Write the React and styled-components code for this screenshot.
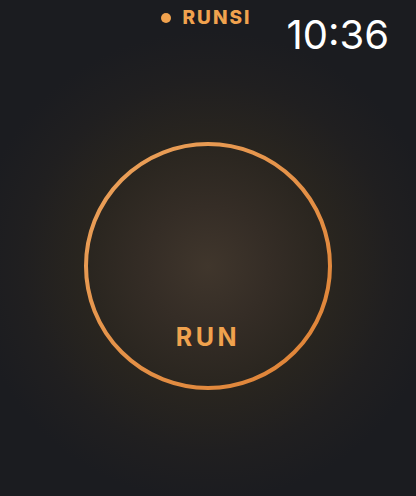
import styled, { createGlobalStyle } from "styled-components";

const GlobalStyle = createGlobalStyle`
  html, body {
    margin: 0;
    padding: 0;
    background: #1b1c20;
  }
  #root {
    height: 100vh;
  }
`;

function App() {
  return (
    <>
      <GlobalStyle />
      <StScreen>
        <StHeader>
          <StBrand>
            <StDot />
            <StBrandName>RUNSI</StBrandName>
          </StBrand>
          <StTime>10:36</StTime>
        </StHeader>
        <StMain>
          <StRing>
            <svg width="248" height="248" viewBox="0 0 248 248">
              <defs>
                <linearGradient id="ringGrad" x1="0" y1="0" x2="1" y2="1">
                  <stop offset="0" stopColor="#eba25c" />
                  <stop offset="1" stopColor="#de8134" />
                </linearGradient>
              </defs>
              <circle
                cx="124"
                cy="124"
                r="122"
                fill="none"
                stroke="url(#ringGrad)"
                strokeWidth="4"
              />
            </svg>
            <StRunLabel>RUN</StRunLabel>
          </StRing>
        </StMain>
      </StScreen>
    </>
  );
}

export default App;

const StScreen = styled.div`
  width: 416px;
  height: 496px;
  overflow: hidden;
  display: flex;
  flex-direction: column;
  font-family: Inter, "Liberation Sans", sans-serif;
  background: radial-gradient(
    circle at 208px 266px,
    #40362c 0px,
    #352d26 60px,
    #29251f 125px,
    #201f20 185px,
    #1b1c20 235px
  );
`;

const StHeader = styled.header`
  display: flex;
  align-items: flex-start;
  justify-content: flex-end;
  padding: 8px 27px 0 0;
  gap: 35px;
`;

const StBrand = styled.div`
  display: flex;
  align-items: center;
  gap: 12px;
`;

const StDot = styled.span`
  width: 10px;
  height: 10px;
  border-radius: 50%;
  background: #f0a24e;
`;

const StBrandName = styled.span`
  color: #f0a24e;
  font-size: 19px;
  font-weight: 800;
  letter-spacing: 2px;
  line-height: 20px;
`;

const StTime = styled.span`
  color: #ffffff;
  font-size: 40px;
  font-weight: 400;
  line-height: 40px;
  margin-top: 7px;
`;

const StMain = styled.main`
  display: flex;
  justify-content: center;
  padding-top: 87px;
`;

const StRing = styled.button`
  position: relative;
  width: 248px;
  height: 248px;
  padding: 0;
  border: none;
  background: none;
  display: flex;
  align-items: flex-end;
  justify-content: center;

  svg {
    position: absolute;
    inset: 0;
  }
`;

const StRunLabel = styled.span`
  color: #f0a24e;
  font-family: Inter, "Liberation Sans", sans-serif;
  font-size: 25px;
  font-weight: 700;
  letter-spacing: 3.5px;
  margin-bottom: 38px;
`;
